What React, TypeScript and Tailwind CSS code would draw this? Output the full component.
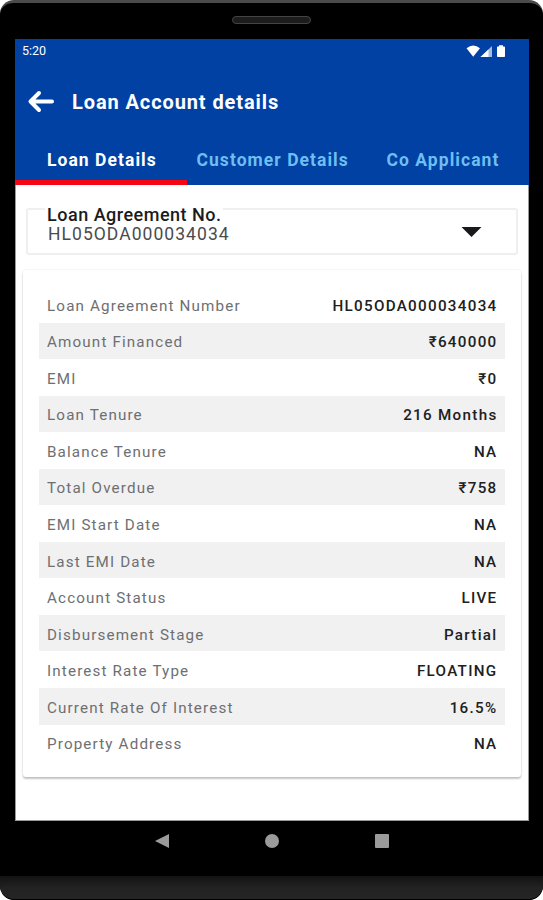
const rows: [string, string][] = [
  ['Loan Agreement Number', 'HL05ODA000034034'],
  ['Amount Financed', '₹640000'],
  ['EMI', '₹0'],
  ['Loan Tenure', '216 Months'],
  ['Balance Tenure', 'NA'],
  ['Total Overdue', '₹758'],
  ['EMI Start Date', 'NA'],
  ['Last EMI Date', 'NA'],
  ['Account Status', 'LIVE'],
  ['Disbursement Stage', 'Partial'],
  ['Interest Rate Type', 'FLOATING'],
  ['Current Rate Of Interest', '16.5%'],
  ['Property Address', 'NA'],
];

function StatusBar() {
  return (
    <div className="flex h-6 items-center justify-between pl-[7px] pr-[23px] text-white">
      <span className="text-[12.500px] leading-4">5:20</span>
      <svg width="40" height="14" viewBox="0 0 40 14" fill="#fff">
        <path d="M0.5 4.2Q7.300 -1 14 4.200L7.200 12.700Z" />
        <path d="M14.500 13L26 2V13Z" opacity=".65" />
        <path d="M14.500 13L22.500 5.500V13Z" />
        <path d="M33 1.300h4v1.300h1.200q.8 0 .8 .8v8.800q0 .8-.8 .8h-6.400q-.8 0-.8-.8V3.400q0-.8.8-.8H33z" />
      </svg>
    </div>
  );
}

function Header() {
  return (
    <header className="flex h-[146px] shrink-0 flex-col bg-[#0041a3]">
      <StatusBar />
      <div className="flex h-[77px] items-center pl-[12px]">
        <svg width="27" height="24" viewBox="0 0 27 24" fill="none" stroke="#fff" strokeWidth="4" strokeLinecap="round" strokeLinejoin="round">
          <path d="M25 11.500H3.500M12 3L3.500 11.500L12 20" />
        </svg>
        <h1 className="ml-[18px] whitespace-nowrap pt-px text-[20px] font-bold leading-6 tracking-[0.9px] text-white">Loan Account details</h1>
      </div>
      <nav className="flex grow whitespace-nowrap text-[17.500px] font-bold leading-[40px] tracking-[1.050px] text-[#6fbef2]">
        <span className="h-[45px] w-[172px] border-b-[5px] border-[#f40612] pl-8 text-white">Loan Details</span>
        <span className="w-[190px] pl-[9.500px]">Customer Details</span>
        <span className="pl-[9.500px]">Co Applicant</span>
      </nav>
    </header>
  );
}

function AgreementSelect() {
  return (
    <div className="mx-[10px] mt-[23px] flex h-[47px] shrink-0 items-start justify-between rounded-[3px] border-2 border-[#efeff0] pl-[18px] pr-[34px]">
      <div className="-mt-[5px] flex flex-col whitespace-nowrap">
        <label className="-ml-px w-[178px] bg-white px-[2px] text-[18px] font-medium leading-[20px] tracking-[0.5px] text-[#1b1b1d]">Loan Agreement No.</label>
        <span className="pl-[2px] text-[17.500px] leading-[18px] tracking-[1.05px] text-[#4a4b4e]">HL05ODA000034034</span>
      </div>
      <svg className="mt-[17px]" width="21" height="10" viewBox="0 0 21 10" fill="#19191b"><path d="M0.500 0H20.500L10.500 10Z" /></svg>
    </div>
  );
}

function DetailsCard() {
  return (
    <section className="mx-[7px] mt-[15px] h-[507px] shrink-0 rounded-[3px] bg-white px-4 pt-[16px] shadow-[0_2px_2px_rgba(0,0,0,0.22),0_0_2px_rgba(0,0,0,0.12)]">
      {rows.map(([label, value]) => (
        <div key={label} className="flex h-[36.550px] items-center justify-between whitespace-nowrap pl-2 pr-[7.500px] pt-[2.800px] text-[15.200px] leading-5 even:bg-[#f1f1f1]">
          <span className="tracking-[1.150px] text-[#6e6f72]">{label}</span>
          <span className="font-medium tracking-[1.300px] text-[#202022]">{value}</span>
        </div>
      ))}
    </section>
  );
}

export default function App() {
  return (
    <div className="h-[900px] w-[543px] bg-white font-['Roboto','Noto_Sans',sans-serif]">
      <div className="flex h-[900px] flex-col overflow-hidden rounded-[14px] border-t-[3px] border-[#4a4a4a] bg-black">
        <div className="flex h-[36px] shrink-0 justify-center pt-[13px]">
          <div className="h-[8px] w-[79px] rounded-full border border-[#444] bg-[#1c1c1c]" />
        </div>
        <main className="ml-[15px] flex h-[782px] w-[514px] shrink-0 flex-col border-x border-b border-[#999] bg-white">
          <div className="-mx-px"><Header /></div>
          <AgreementSelect />
          <DetailsCard />
        </main>
        <div className="flex h-[55px] shrink-0 items-start gap-[96px] pl-[155px] pt-[13px]">
          <svg width="14" height="14" viewBox="0 0 14 14" fill="#9b9b9b"><path d="M0 7L14 0V14Z" /></svg>
          <div className="size-[14px] rounded-full bg-[#9b9b9b]" />
          <div className="size-[14px] rounded-[1px] bg-[#9b9b9b]" />
        </div>
        <div className="grow rounded-b-[14px] border-b border-black bg-linear-to-b from-[#121212] via-[#222] to-[#252525]" />
      </div>
    </div>
  );
}
